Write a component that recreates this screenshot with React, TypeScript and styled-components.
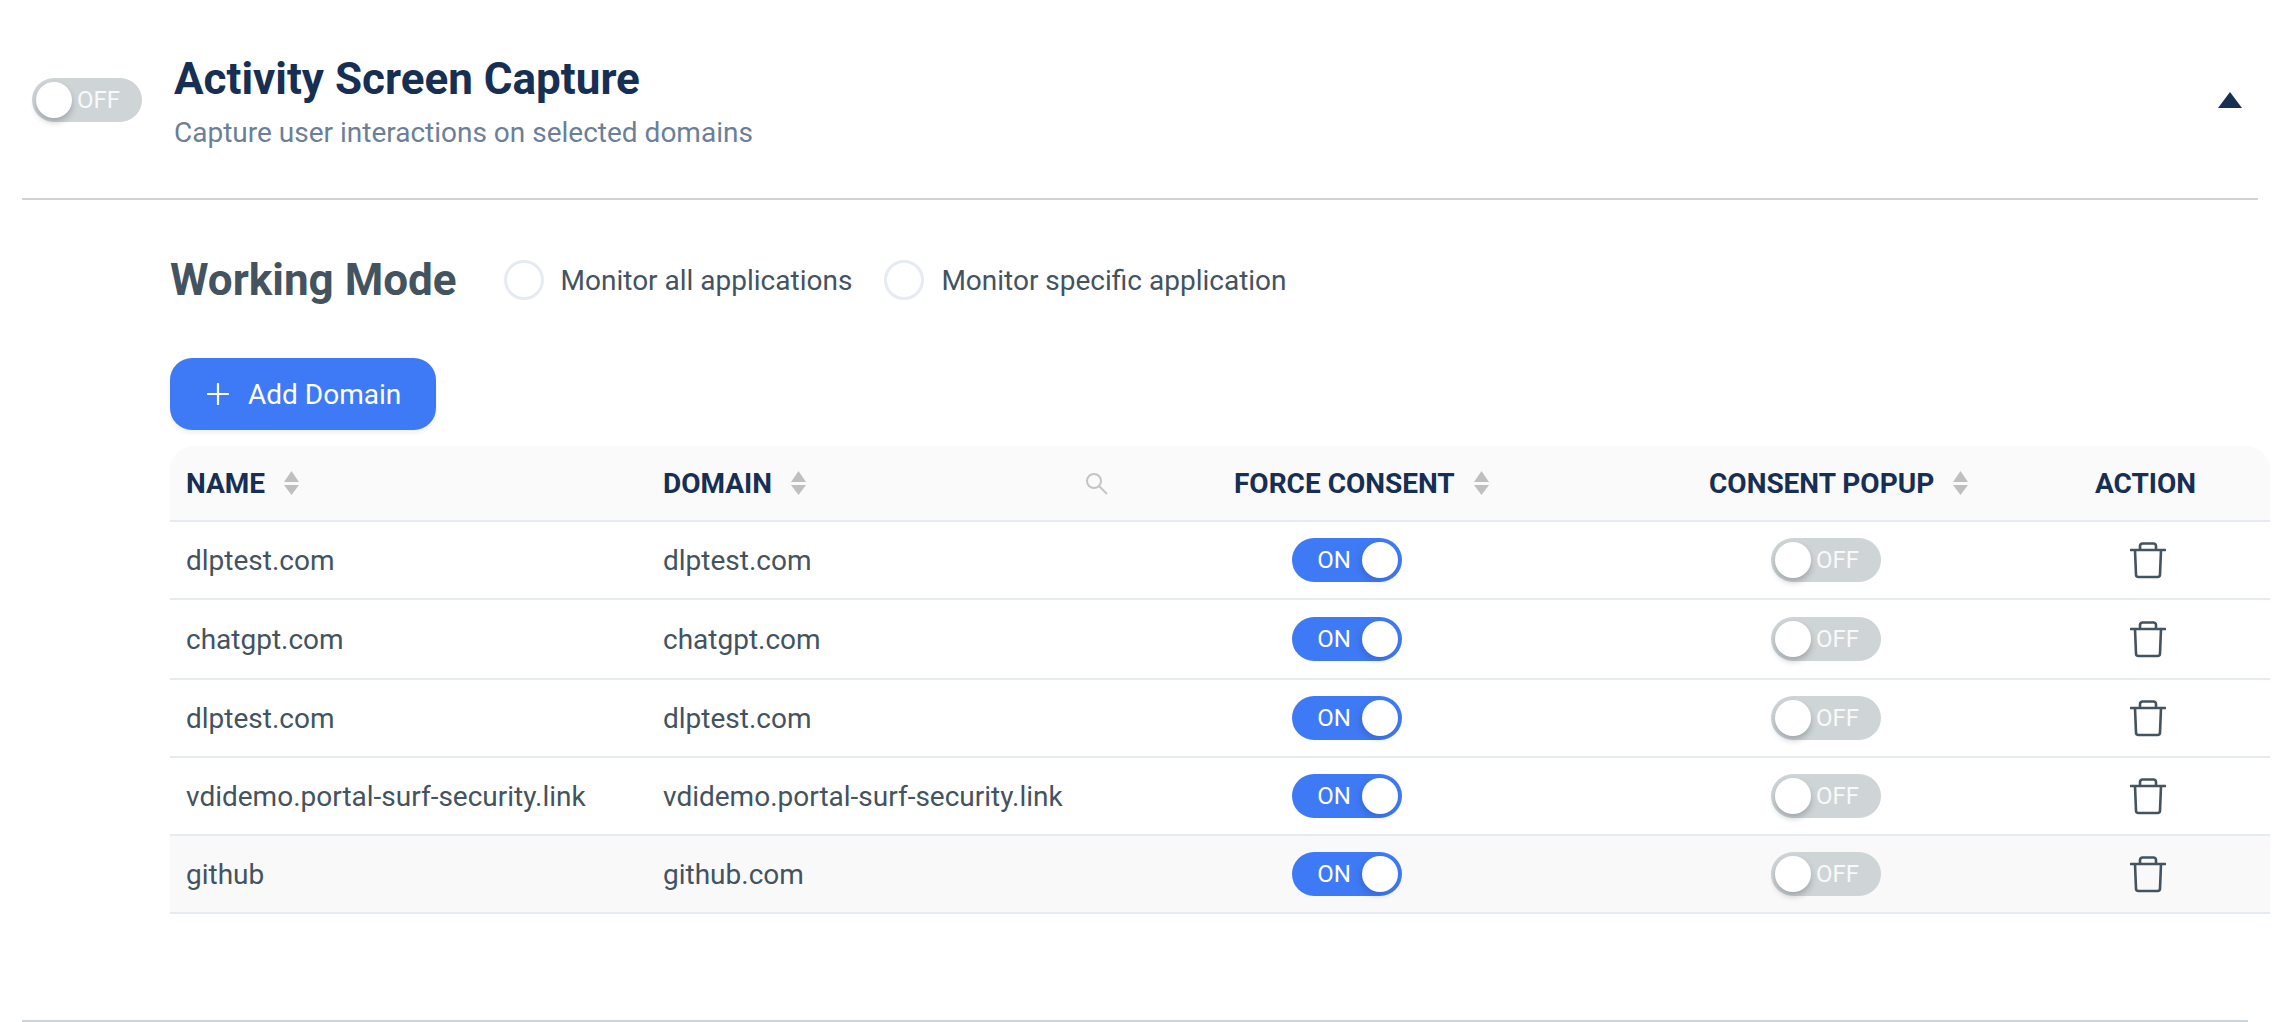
import React from 'react';
import styled, { createGlobalStyle } from 'styled-components';

const Global = createGlobalStyle`
  html, body { margin: 0; padding: 0; background: #fff; }
  body { font-family: Roboto, "Liberation Sans", sans-serif; }
`;

const Page = styled.div`
  width: 2280px;
  height: 1022px;
  overflow: hidden;
  display: flex;
  flex-direction: column;
`;

const Header = styled.header`
  margin: 0 22px;
  height: 200px;
  box-sizing: border-box;
  border-bottom: 2px solid #cfd3d7;
  display: flex;
  align-items: flex-start;
  padding: 54px 16px 0 10px;
`;

const HeaderToggleSlot = styled.div`
  margin: 24px 32px 0 0;
`;

const Titles = styled.div`
  flex: 1;
  display: flex;
  flex-direction: column;
  gap: 12px;
`;

const Title = styled.h1`
  margin: 0;
  font-size: 44px;
  line-height: 50px;
  font-weight: 700;
  color: #172f53;
`;

const Subtitle = styled.p`
  margin: 0;
  font-size: 28px;
  line-height: 34px;
  color: #6b7f99;
`;

const CollapseTriangle = styled.div`
  width: 0;
  height: 0;
  margin-top: 38px;
  border-left: 12px solid transparent;
  border-right: 12px solid transparent;
  border-bottom: 16px solid #172f53;
`;

const Body = styled.section`
  padding: 0 10px 0 170px;
  flex: 1;
  display: flex;
  flex-direction: column;
`;

const ModeRow = styled.div`
  display: flex;
  align-items: center;
  height: 40px;
  margin-top: 60px;
`;

const ModeTitle = styled.h2`
  margin: 0 47px 0 0;
  font-size: 44px;
  font-weight: 700;
  color: #43535f;
`;

const RadioLabel = styled.label`
  display: flex;
  align-items: center;
  gap: 17px;
  margin-right: 32px;
  font-size: 28px;
  color: #43535f;
`;

const RadioCircle = styled.span`
  width: 40px;
  height: 40px;
  box-sizing: border-box;
  border-radius: 50%;
  border: 3px solid #e6ebf2;
  background: #fff;
`;

const AddButton = styled.button`
  align-self: flex-start;
  margin-top: 58px;
  width: 266px;
  height: 72px;
  padding: 0 0 0 37px;
  border: none;
  border-radius: 22px;
  background: #3f7af6;
  color: #fff;
  font: 400 28px Roboto, sans-serif;
  display: flex;
  align-items: center;
  gap: 19px;
  box-shadow: 0 3px 4px rgba(60, 70, 90, 0.08);
`;

const COLUMNS = '477px 477px 446px 512px 188px';

const TableHead = styled.div`
  margin-top: 16px;
  height: 76px;
  box-sizing: border-box;
  display: grid;
  grid-template-columns: ${COLUMNS};
  background: #fafafa;
  border-bottom: 2px solid #e6ebf2;
  border-radius: 24px 24px 0 0;
`;

const HeadCell = styled.div<{ $inset: number }>`
  display: flex;
  align-items: center;
  padding: 0 16px 0 ${p => p.$inset}px;
  font-size: 28px;
  font-weight: 700;
  color: #172f53;
`;

const SortIcon = styled.svg`
  margin-left: 19px;
  flex: none;
`;

const SearchIcon = styled.svg`
  margin-left: auto;
  flex: none;
`;

const TableRow = styled.div<{ $shaded: boolean; $height: number }>`
  display: grid;
  grid-template-columns: ${COLUMNS};
  height: ${p => p.$height}px;
  box-sizing: border-box;
  border-bottom: 2px solid #e6ebf2;
  background: ${p => (p.$shaded ? '#f9f9fa' : '#fff')};
`;

const TextCell = styled.div`
  display: flex;
  align-items: center;
  padding-left: 16px;
  font-size: 28px;
  color: #43535f;
`;

const ToggleCell = styled.div`
  display: flex;
  align-items: center;
  justify-content: center;
`;

const ActionCell = styled.div`
  display: flex;
  align-items: center;
  padding-left: 48px;
`;

const Track = styled.span<{ $on: boolean }>`
  width: 110px;
  height: 44px;
  box-sizing: border-box;
  padding: 0 4px;
  border-radius: 22px;
  background: ${p => (p.$on ? '#3f7af6' : '#cfd4d6')};
  display: flex;
  flex-direction: ${p => (p.$on ? 'row-reverse' : 'row')};
  align-items: center;
  color: ${p => (p.$on ? '#fff' : '#f8f9f9')};
  font-size: 24px;
`;

const Knob = styled.span<{ $on: boolean }>`
  width: 36px;
  height: 36px;
  border-radius: 50%;
  background: #fff;
  box-shadow: ${p => (p.$on ? '-2px 3px 6px rgba(30, 50, 90, 0.22)' : '0 4px 6px rgba(40, 50, 60, 0.28)')};
`;

const ToggleLabel = styled.span<{ $on: boolean }>`
  margin: ${p => (p.$on ? '0 11px 0 0' : '0 0 0 5px')};
`;

const Footer = styled.div`
  margin: auto 22px 0 -148px;
  height: 2px;
  background: #cfd4d8;
`;

const Toggle = ({ on }: { on: boolean }) => (
  <Track $on={on}>
    <Knob $on={on} />
    <ToggleLabel $on={on}>{on ? 'ON' : 'OFF'}</ToggleLabel>
  </Track>
);

const Sort = () => (
  <SortIcon width="15" height="24" viewBox="0 0 15 24">
    <path d="M7.5 0 L15 11 H0 Z M0 14 H15 L7.5 24 Z" fill="#bfbfbf" />
  </SortIcon>
);

const Trash = () => (
  <svg width="36" height="37" viewBox="0 0 36 37" fill="none" stroke="#43535f" strokeWidth="2.6" strokeLinejoin="round">
    <path d="M1 8 H35" strokeLinecap="round" />
    <path d="M10 8 V4 a2.5 2.5 0 0 1 2.5-2.5 h11 a2.5 2.5 0 0 1 2.5 2.5 V8" />
    <path d="M5 8 L6 32.5 a2.5 2.5 0 0 0 2.5 2.5 h19 a2.5 2.5 0 0 0 2.5-2.5 L31 8" />
  </svg>
);

const rows = [
  { name: 'dlptest.com', domain: 'dlptest.com', height: 78 },
  { name: 'chatgpt.com', domain: 'chatgpt.com', height: 80 },
  { name: 'dlptest.com', domain: 'dlptest.com', height: 78 },
  { name: 'vdidemo.portal-surf-security.link', domain: 'vdidemo.portal-surf-security.link', height: 78 },
  { name: 'github', domain: 'github.com', height: 78 },
];

export default function App() {
  return (
    <Page>
      <Global />
      <Header>
        <HeaderToggleSlot>
          <Toggle on={false} />
        </HeaderToggleSlot>
        <Titles>
          <Title>Activity Screen Capture</Title>
          <Subtitle>Capture user interactions on selected domains</Subtitle>
        </Titles>
        <CollapseTriangle />
      </Header>
      <Body>
        <ModeRow>
          <ModeTitle>Working Mode</ModeTitle>
          <RadioLabel><RadioCircle />Monitor all applications</RadioLabel>
          <RadioLabel><RadioCircle />Monitor specific application</RadioLabel>
        </ModeRow>
        <AddButton>
          <svg width="22" height="22" viewBox="0 0 22 22" stroke="#fff" strokeWidth="2.2" strokeLinecap="round">
            <path d="M11 1 V21 M1 11 H21" />
          </svg>
          Add Domain
        </AddButton>
        <TableHead>
          <HeadCell $inset={16}>NAME<Sort /></HeadCell>
          <HeadCell $inset={16}>
            DOMAIN<Sort />
            <SearchIcon width="23" height="23" viewBox="0 0 23 23" fill="none" stroke="#c4c4c4" strokeWidth="2">
              <circle cx="9" cy="9" r="7" />
              <path d="M14 14 L22 22" />
            </SearchIcon>
          </HeadCell>
          <HeadCell $inset={110}>FORCE CONSENT<Sort /></HeadCell>
          <HeadCell $inset={139}>CONSENT POPUP<Sort /></HeadCell>
          <HeadCell $inset={13}>ACTION</HeadCell>
        </TableHead>
        {rows.map((row, i) => (
          <TableRow key={i} $shaded={i === 4} $height={row.height}>
            <TextCell>{row.name}</TextCell>
            <TextCell>{row.domain}</TextCell>
            <ToggleCell><Toggle on /></ToggleCell>
            <ToggleCell><Toggle on={false} /></ToggleCell>
            <ActionCell><Trash /></ActionCell>
          </TableRow>
        ))}
        <Footer />
      </Body>
    </Page>
  );
}
